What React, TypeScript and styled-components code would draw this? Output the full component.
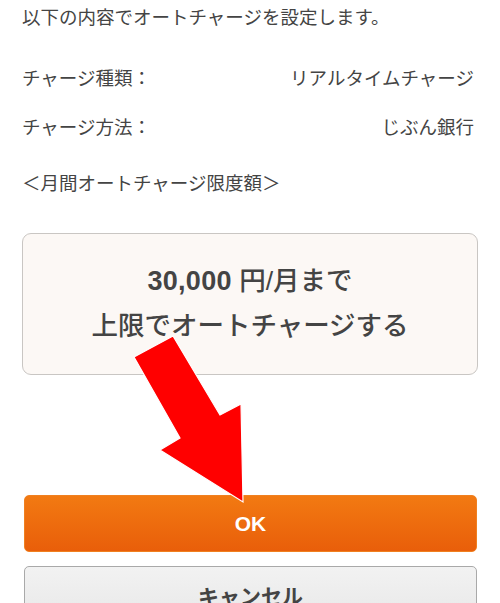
import styled, { createGlobalStyle } from 'styled-components'

const GlobalStyle = createGlobalStyle`
  html, body {
    margin: 0;
    padding: 0;
    background: #ffffff;
  }
  body {
    font-family: "Liberation Sans", "Noto Sans CJK JP", sans-serif;
    color: #444444;
  }
`

const Page = styled.div`
  position: relative;
  width: 500px;
  height: 603px;
  overflow: hidden;
  box-sizing: border-box;
  padding: 4px 22px 0 22px;
`

const Intro = styled.p`
  margin: 0;
  font-size: 18.5px;
  line-height: 27px;
`

const InfoRow = styled.div<{ $gap: number }>`
  display: flex;
  justify-content: space-between;
  margin-top: ${(p) => p.$gap}px;
  padding-right: 4px;
  font-size: 18.5px;
  line-height: 27px;
`

const Heading = styled.p`
  margin: 29px 0 0;
  font-size: 18.5px;
  line-height: 27px;
`

const LimitCard = styled.div`
  margin-top: 36px;
  height: 142px;
  box-sizing: border-box;
  border: 1.5px solid #c9c6c3;
  border-radius: 9px;
  background: #fcf8f5;
  display: flex;
  flex-direction: column;
  align-items: center;
  justify-content: center;
  gap: 9px;
  padding-bottom: 2px;
`

const CardLine = styled.div`
  font-size: 26.5px;
  line-height: 36px;
  font-weight: 500;
  color: #444444;
`

const Amount = styled.span`
  font-weight: 700;
  font-size: 27px;
  letter-spacing: 0.3px;
`

const Buttons = styled.div`
  margin: 120px 1px 0 2px;
  display: flex;
  flex-direction: column;
  gap: 14px;
`

const Button = styled.button<{ $primary?: boolean }>`
  height: 57px;
  width: 100%;
  border-radius: 5px;
  font-family: inherit;
  font-size: 21px;
  font-weight: 700;
  cursor: pointer;
  border: ${(p) => (p.$primary ? '1px solid #f08020' : '1.5px solid #a9a9a9')};
  color: ${(p) => (p.$primary ? '#ffffff' : '#444444')};
  background: ${(p) =>
    p.$primary ? 'linear-gradient(#f27a12, #e95e0a)' : 'linear-gradient(#f2f2f2, #e8e8e8)'};
`

const ArrowLayer = styled.svg`
  position: absolute;
  left: 0;
  top: 0;
  width: 500px;
  height: 603px;
  pointer-events: none;
`

const App = () => {
  return (
    <>
      <GlobalStyle />
      <Page>
        <Intro>以下の内容でオートチャージを設定します。</Intro>
        <InfoRow $gap={34}>
          <span>チャージ種類：</span>
          <span>リアルタイムチャージ</span>
        </InfoRow>
        <InfoRow $gap={22}>
          <span>チャージ方法：</span>
          <span>じぶん銀行</span>
        </InfoRow>
        <Heading>＜月間オートチャージ限度額＞</Heading>
        <LimitCard>
          <CardLine>
            <Amount>30,000</Amount> 円/月まで
          </CardLine>
          <CardLine>上限でオートチャージする</CardLine>
        </LimitCard>
        <Buttons>
          <Button $primary>OK</Button>
          <Button>キャンセル</Button>
        </Buttons>
        <ArrowLayer viewBox="0 0 500 603">
          <polygon
            points="134,357 173,336 220,415 241,404 243,502 160,450 180,438"
            fill="#ff0000"
            stroke="#ffffff"
            strokeWidth="1.2"
            strokeLinejoin="miter"
          />
        </ArrowLayer>
      </Page>
    </>
  )
}

export default App
